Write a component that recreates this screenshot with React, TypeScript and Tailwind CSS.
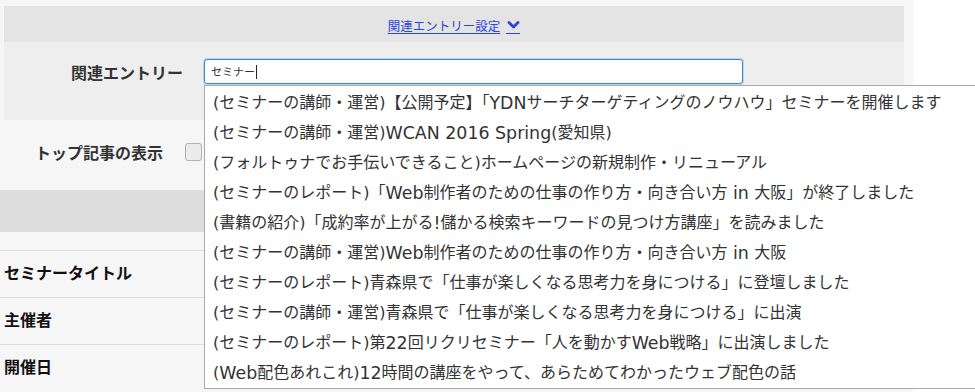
import React from "react";

const entries: string[] = [
  "(セミナーの講師・運営)【公開予定】「YDNサーチターゲティングのノウハウ」セミナーを開催します",
  "(セミナーの講師・運営)WCAN 2016 Spring(愛知県)",
  "(フォルトゥナでお手伝いできること)ホームページの新規制作・リニューアル",
  "(セミナーのレポート)「Web制作者のための仕事の作り方・向き合い方 in 大阪」が終了しました",
  "(書籍の紹介)「成約率が上がる!儲かる検索キーワードの見つけ方講座」を読みました",
  "(セミナーの講師・運営)Web制作者のための仕事の作り方・向き合い方 in 大阪",
  "(セミナーのレポート)青森県で「仕事が楽しくなる思考力を身につける」に登壇しました",
  "(セミナーの講師・運営)青森県で「仕事が楽しくなる思考力を身につける」に出演",
  "(セミナーのレポート)第22回リクリセミナー「人を動かすWeb戦略」に出演しました",
  "(Web配色あれこれ)12時間の講座をやって、あらためてわかったウェブ配色の話",
];

const rows = ["セミナータイトル", "主催者", "開催日"];

// latin runs render a bit larger, like the original's system font
const EntryText = ({ text }: { text: string }) => (
  <>
    {text.split(/([A-Za-z0-9 !]+)/).map((part, i) =>
      /^[A-Za-z0-9 !]+$/.test(part) ? (
        <span key={i} className="text-[17.4px]">{part}</span>
      ) : (
        <span key={i}>{part}</span>
      )
    )}
  </>
);

const ChevronDown = () => (
  <span className="inline-flex flex-col items-center">
    <svg width="13" height="8" viewBox="0 0 13 8">
      <path d="M2 1.5 L6.5 6 L11 1.5" fill="none" stroke="#2b44d8" strokeWidth="2.8" strokeLinecap="round" strokeLinejoin="round" />
    </svg>
    <span className="mt-[4px] h-px w-[14px] bg-[#2b44d8]" />
  </span>
);

const App: React.FC = () => {
  return (
    <div className="relative flex w-[975px] h-[392px] overflow-hidden bg-white font-['Noto_Sans_CJK_JP',sans-serif] text-[#333]">
      <div className="w-[913px] bg-[#f6f6f6] pt-[6px]">
        <div className="ml-[4px] w-[900px]">
          <div className="flex h-[36px] items-center justify-center bg-[#e4e4e4]">
            <a href="#" className="flex items-end gap-[6px] pt-[3px] text-[12.5px] leading-[16px] text-[#2b44d8] underline underline-offset-2">
              関連エントリー設定
              <ChevronDown />
            </a>
          </div>
          <div className="h-[78px] bg-[#eeeeee] pt-[17px]">
            <div className="flex h-[25px] items-center">
              <div className="w-[179px] text-right text-[16px] font-bold leading-none">関連エントリー</div>
              <div className="ml-[21px] flex h-[25px] w-[539px] items-center rounded-[3px] border border-[#3b86e0] bg-white px-[6px] text-[11px] text-[#333] shadow-[0_0_0_1px_rgba(59,134,224,0.25)]">
                セミナー
                <span className="ml-[1px] inline-block h-[14px] w-px bg-[#222]" />
              </div>
            </div>
          </div>
        </div>

        <div className="flex h-[70px] items-center pb-[6px]">
          <div className="w-[163px] text-right text-[16px] font-bold leading-none">トップ記事の表示</div>
          <div className="ml-[22px] h-[18px] w-[17px] rounded-[3px] border border-[#b0b0b0] bg-[#ececec]" />
        </div>

        <div className="h-[42px] bg-[#dddddd]" />
        <div className="h-[18px]" />

        {rows.map((r) => (
          <div key={r} className="flex h-[47px] items-center border-t border-[#dddddd] pb-[4px] pl-[4px] text-[16px] font-bold text-[#111]">
            {r}
          </div>
        ))}
      </div>

      <div className="absolute left-[204px] top-[85px] w-[790px] border border-[#aaaaaa] bg-white pt-[2px] font-['DejaVu_Sans','Noto_Sans_CJK_JP',sans-serif]">
        {entries.map((e) => (
          <div key={e} className="flex h-[30px] items-center whitespace-pre pl-[8px] text-[16px] text-[#333]">
            <EntryText text={e} />
          </div>
        ))}
      </div>
    </div>
  );
};

export default App;
